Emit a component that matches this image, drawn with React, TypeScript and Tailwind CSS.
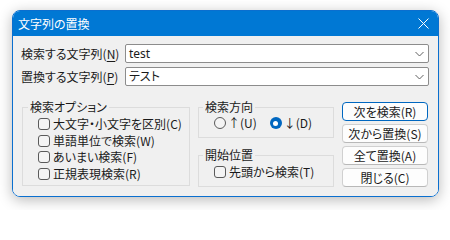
import React from 'react';

const font = "font-['Noto_Sans_CJK_JP','Noto_Sans',sans-serif] [font-feature-settings:'palt']";

function Chevron() {
  return (
    <svg width="9" height="6" viewBox="0 0 9 6" className="shrink-0">
      <path d="M0.5 1 L4.5 5 L8.5 1" fill="none" stroke="#606060" strokeWidth="1" />
    </svg>
  );
}

function Combo({ value }: { value: string }) {
  return (
    <div className="flex h-[19px] w-[304px] items-center justify-between rounded-[2px] border border-[#8c8c8c] bg-white pl-[3px] pr-[4px]">
      <span className="font-['Noto_Sans','Noto_Sans_CJK_JP',sans-serif] text-[12px] leading-none text-[#1a1a1a]">{value}</span>
      <Chevron />
    </div>
  );
}

function Check({ label }: { label: string }) {
  return (
    <div className="flex h-[16.5px] items-center gap-[3px]">
      <span className="h-[12px] w-[12px] shrink-0 rounded-[3px] border border-[#5a5a5a] bg-[#f4f4f4]" />
      <span className="text-[12px] leading-none">{label}</span>
    </div>
  );
}

function Radio({ label, checked }: { label: string; checked?: boolean }) {
  return (
    <div className="flex items-center gap-[2px]">
      {checked ? (
        <span className="flex h-[12px] w-[12px] items-center justify-center rounded-full bg-[#0067c0]">
          <span className="h-[5px] w-[5px] rounded-full bg-white" />
        </span>
      ) : (
        <span className="h-[12px] w-[12px] rounded-full border border-[#5a5a5a] bg-[#f4f4f4]" />
      )}
      <span className="text-[12px] leading-none">{label}</span>
    </div>
  );
}

function Btn({ label, primary }: { label: string; primary?: boolean }) {
  return (
    <button
      className={
        primary
          ? 'flex h-[19px] w-[86px] items-center justify-center rounded-[4px] border border-[#0067c0] bg-[#fdfdfd] text-[12px] leading-none'
          : 'flex h-[19px] w-[86px] items-center justify-center rounded-[4px] border border-[#d0d0d0] border-b-[#b8b8b8] bg-[#fdfdfd] text-[12px] leading-none'
      }
    >
      {label}
    </button>
  );
}

export default function App() {
  return (
    <div className={`h-[210px] w-[450px] bg-white pl-[12px] pt-[10px] ${font} text-[#1a1a1a]`}>
      <div className="flex h-[187px] w-[427px] flex-col overflow-hidden rounded-[8px] border border-[#0a6fcf] shadow-[0_3px_14px_rgba(0,0,0,0.28)]">
        <div className="flex h-[25px] shrink-0 items-center justify-between bg-[#0078d4] pl-[5px] pr-[9px] text-white">
          <span className="text-[12px] leading-none">文字列の置換</span>
          <svg width="11" height="11" viewBox="0 0 11 11">
            <path d="M0.5 0.5 L10.5 10.5 M10.5 0.5 L0.5 10.5" stroke="white" strokeWidth="1" />
          </svg>
        </div>

        <div className="flex flex-1 flex-col bg-[#f0f0f0] pl-[8px] pt-[8px]">
          <div className="flex flex-col gap-[4px]">
            <div className="flex items-center">
              <span className="w-[104px] text-[12px] leading-none">
                検索する文字列(<span className="underline underline-offset-2">N</span>)
              </span>
              <Combo value="test" />
            </div>
            <div className="flex items-center">
              <span className="w-[104px] text-[12px] leading-none">
                置換する文字列(<span className="underline underline-offset-2">P</span>)
              </span>
              <Combo value="テスト" />
            </div>
          </div>

          <div className="mt-[13px] flex items-start">
            <fieldset className="ml-[1px] h-[87px] w-[168px] border border-[#dcdcdc] pl-[15px] pt-[1px]">
              <legend className="-ml-[10px] px-[2px] text-[12px] leading-[16px]">検索オプション</legend>
              <Check label="大文字・小文字を区別(C)" />
              <Check label="単語単位で検索(W)" />
              <Check label="あいまい検索(F)" />
              <Check label="正規表現検索(R)" />
            </fieldset>

            <div className="ml-[8px] flex w-[136px] flex-col gap-[9px]">
              <fieldset className="h-[39px] border border-[#dcdcdc] pl-[15px] pt-[2px]">
                <legend className="-ml-[11px] px-[2px] text-[12px] leading-[16px]">検索方向</legend>
                <div className="flex items-center gap-[13px]">
                  <Radio label="↑(U)" />
                  <Radio label="↓(D)" checked />
                </div>
              </fieldset>
              <fieldset className="h-[40px] border border-[#dcdcdc] pl-[15px] pt-[3px]">
                <legend className="-ml-[11px] px-[2px] text-[12px] leading-[16px]">開始位置</legend>
                <div className="flex h-[12px] items-center gap-[3px]">
                  <span className="h-[12px] w-[12px] shrink-0 rounded-[3px] border border-[#5a5a5a] bg-[#f4f4f4]" />
                  <span className="text-[12px] leading-none">先頭から検索(T)</span>
                </div>
              </fieldset>
            </div>

            <div className="ml-[8px] mt-[3px] flex flex-col gap-[3px]">
              <Btn label="次を検索(R)" primary />
              <Btn label="次から置換(S)" />
              <Btn label="全て置換(A)" />
              <Btn label="閉じる(C)" />
            </div>
          </div>
        </div>
      </div>
    </div>
  );
}
